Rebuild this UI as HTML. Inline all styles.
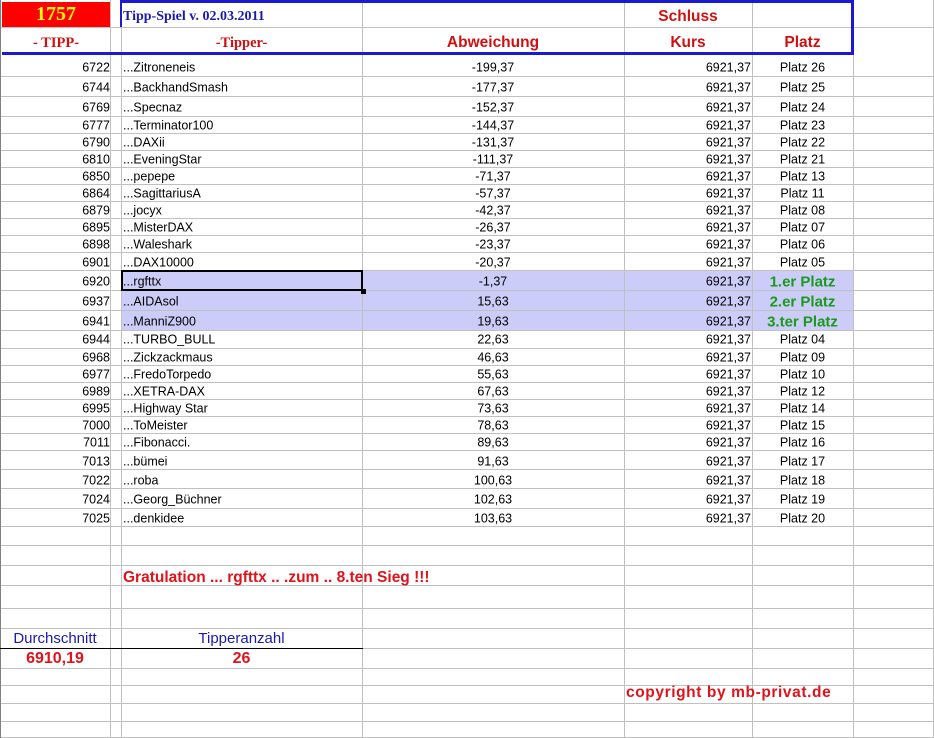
<!DOCTYPE html>
<html><head><meta charset="utf-8"><style>
*{margin:0;padding:0;box-sizing:border-box}
body{width:934px;height:738px;background:#fff;position:relative;overflow:hidden;font-family:"Liberation Sans",Arial,sans-serif;font-size:12.5px;color:#000}
.h{position:absolute;height:1px;background:#c0c0c0;left:0;width:934px}
.v{position:absolute;width:1px;background:#c0c0c0;top:0;height:738px}
.r{position:absolute;left:0;width:934px;display:flex;align-items:center}
.r div{position:absolute;white-space:nowrap;line-height:1;top:50%;transform:translateY(-45%)}
.a{right:824px;text-align:right}
.b{left:123px}
.c{left:362px;width:262px;text-align:center}
.d{right:183px}
.e{left:752px;width:101px;text-align:center}
.hl{position:absolute;left:121px;width:732px;background:#ccccf8}
.g{color:#1a9a1a;font-weight:bold;font-size:15px}
.red{color:#e0121a;font-weight:bold}
</style></head><body>
<div class="hl" style="top:270px;height:60px"></div>
<div style="position:absolute;left:2px;top:2px;width:108px;height:25px;background:#f00"></div>
<div class="h" style="top:27px"></div>
<div class="h" style="top:76px"></div><div class="h" style="top:96px"></div><div class="h" style="top:116px"></div><div class="h" style="top:133px"></div><div class="h" style="top:150px"></div><div class="h" style="top:167px"></div><div class="h" style="top:184px"></div><div class="h" style="top:201px"></div><div class="h" style="top:218px"></div><div class="h" style="top:235px"></div><div class="h" style="top:252px"></div><div class="h" style="top:270px"></div><div class="h" style="top:290px"></div><div class="h" style="top:310px"></div><div class="h" style="top:330px"></div><div class="h" style="top:348px"></div><div class="h" style="top:365px"></div><div class="h" style="top:382px"></div><div class="h" style="top:399px"></div><div class="h" style="top:416px"></div><div class="h" style="top:433px"></div><div class="h" style="top:450px"></div><div class="h" style="top:469px"></div><div class="h" style="top:488px"></div><div class="h" style="top:508px"></div><div class="h" style="top:526px"></div><div class="h" style="top:545px"></div><div class="h" style="top:565px"></div><div class="h" style="top:585px"></div><div class="h" style="top:608px"></div><div class="h" style="top:628px"></div><div class="h" style="top:648px"></div><div class="h" style="top:668px"></div><div class="h" style="top:685px"></div><div class="h" style="top:703px"></div><div class="h" style="top:721px"></div><div class="h" style="top:737px"></div>
<div class="v" style="left:0;background:#808080"></div>
<div class="v" style="left:110px"></div><div class="v" style="left:121px"></div><div class="v" style="left:362px"></div><div class="v" style="left:624px"></div><div class="v" style="left:752px"></div><div class="v" style="left:853px"></div><div class="v" style="left:933px"></div>
<div style="position:absolute;left:121px;top:0;width:733px;height:3px;background:#1a1ad0"></div>
<div style="position:absolute;left:2px;top:52px;width:852px;height:3px;background:#1a1ad0"></div>
<div style="position:absolute;left:851px;top:0;width:3px;height:55px;background:#1a1ad0"></div>
<div style="position:absolute;left:120px;top:0;width:2px;height:27px;background:#1a1ad0"></div>
<div style="position:absolute;left:121px;top:270px;width:242px;height:21px;border:2px solid #000"></div>
<div style="position:absolute;left:361px;top:289px;width:5px;height:5px;background:#000"></div>
<div style="position:absolute;left:0;top:648px;width:363px;height:1px;background:#000"></div>
<div style="position:absolute;left:2px;width:108px;top:3px;text-align:center;font:bold 20px 'Liberation Serif',serif;color:#ff0">1757</div>
<div style="position:absolute;left:123px;top:9px;font:bold 14px 'Liberation Serif',serif;color:#1a1ab0">Tipp-Spiel v. 02.03.2011</div>
<div style="position:absolute;left:0;width:112px;top:35px;text-align:center;font:bold 14.5px 'Liberation Serif',serif;color:#d01010">- TIPP-</div>
<div style="position:absolute;left:121px;width:241px;top:35px;text-align:center;font:bold 14.5px 'Liberation Serif',serif;color:#d01010">-Tipper-</div>
<div style="position:absolute;left:362px;width:262px;top:34px;text-align:center;font:bold 15.5px 'Liberation Sans',sans-serif;color:#d01010">Abweichung</div>
<div style="position:absolute;left:624px;width:128px;top:8px;text-align:center;font:bold 15.5px 'Liberation Sans',sans-serif;color:#d01010">Schluss</div>
<div style="position:absolute;left:624px;width:128px;top:34px;text-align:center;font:bold 15.5px 'Liberation Sans',sans-serif;color:#d01010">Kurs</div>
<div style="position:absolute;left:752px;width:101px;top:34px;text-align:center;font:bold 15.5px 'Liberation Sans',sans-serif;color:#d01010">Platz</div>
<div class="r" style="top:55px;height:23px"><div class="a">6722</div><div class="b">...Zitroneneis</div><div class="c">-199,37</div><div class="d">6921,37</div><div class="e">Platz 26</div></div>
<div class="r" style="top:76px;height:21px"><div class="a">6744</div><div class="b">...BackhandSmash</div><div class="c">-177,37</div><div class="d">6921,37</div><div class="e">Platz 25</div></div>
<div class="r" style="top:96px;height:21px"><div class="a">6769</div><div class="b">...Specnaz</div><div class="c">-152,37</div><div class="d">6921,37</div><div class="e">Platz 24</div></div>
<div class="r" style="top:116px;height:17px"><div class="a">6777</div><div class="b">...Terminator100</div><div class="c">-144,37</div><div class="d">6921,37</div><div class="e">Platz 23</div></div>
<div class="r" style="top:133px;height:17px"><div class="a">6790</div><div class="b">...DAXii</div><div class="c">-131,37</div><div class="d">6921,37</div><div class="e">Platz 22</div></div>
<div class="r" style="top:150px;height:17px"><div class="a">6810</div><div class="b">...EveningStar</div><div class="c">-111,37</div><div class="d">6921,37</div><div class="e">Platz 21</div></div>
<div class="r" style="top:167px;height:17px"><div class="a">6850</div><div class="b">...pepepe</div><div class="c">-71,37</div><div class="d">6921,37</div><div class="e">Platz 13</div></div>
<div class="r" style="top:184px;height:17px"><div class="a">6864</div><div class="b">...SagittariusA</div><div class="c">-57,37</div><div class="d">6921,37</div><div class="e">Platz 11</div></div>
<div class="r" style="top:201px;height:17px"><div class="a">6879</div><div class="b">...jocyx</div><div class="c">-42,37</div><div class="d">6921,37</div><div class="e">Platz 08</div></div>
<div class="r" style="top:218px;height:17px"><div class="a">6895</div><div class="b">...MisterDAX</div><div class="c">-26,37</div><div class="d">6921,37</div><div class="e">Platz 07</div></div>
<div class="r" style="top:235px;height:17px"><div class="a">6898</div><div class="b">...Waleshark</div><div class="c">-23,37</div><div class="d">6921,37</div><div class="e">Platz 06</div></div>
<div class="r" style="top:252px;height:19px"><div class="a">6901</div><div class="b">...DAX10000</div><div class="c">-20,37</div><div class="d">6921,37</div><div class="e">Platz 05</div></div>
<div class="r" style="top:270px;height:21px"><div class="a">6920</div><div class="b">...rgfttx</div><div class="c">-1,37</div><div class="d">6921,37</div><div class="e g">1.er Platz</div></div>
<div class="r" style="top:290px;height:21px"><div class="a">6937</div><div class="b">...AIDAsol</div><div class="c">15,63</div><div class="d">6921,37</div><div class="e g">2.er Platz</div></div>
<div class="r" style="top:310px;height:21px"><div class="a">6941</div><div class="b">...ManniZ900</div><div class="c">19,63</div><div class="d">6921,37</div><div class="e g">3.ter Platz</div></div>
<div class="r" style="top:330px;height:18px"><div class="a">6944</div><div class="b">...TURBO_BULL</div><div class="c">22,63</div><div class="d">6921,37</div><div class="e">Platz 04</div></div>
<div class="r" style="top:348px;height:18px"><div class="a">6968</div><div class="b">...Zickzackmaus</div><div class="c">46,63</div><div class="d">6921,37</div><div class="e">Platz 09</div></div>
<div class="r" style="top:365px;height:18px"><div class="a">6977</div><div class="b">...FredoTorpedo</div><div class="c">55,63</div><div class="d">6921,37</div><div class="e">Platz 10</div></div>
<div class="r" style="top:382px;height:18px"><div class="a">6989</div><div class="b">...XETRA-DAX</div><div class="c">67,63</div><div class="d">6921,37</div><div class="e">Platz 12</div></div>
<div class="r" style="top:399px;height:18px"><div class="a">6995</div><div class="b">...Highway Star</div><div class="c">73,63</div><div class="d">6921,37</div><div class="e">Platz 14</div></div>
<div class="r" style="top:416px;height:18px"><div class="a">7000</div><div class="b">...ToMeister</div><div class="c">78,63</div><div class="d">6921,37</div><div class="e">Platz 15</div></div>
<div class="r" style="top:433px;height:18px"><div class="a">7011</div><div class="b">...Fibonacci.</div><div class="c">89,63</div><div class="d">6921,37</div><div class="e">Platz 16</div></div>
<div class="r" style="top:450px;height:22px"><div class="a">7013</div><div class="b">...bümei</div><div class="c">91,63</div><div class="d">6921,37</div><div class="e">Platz 17</div></div>
<div class="r" style="top:469px;height:21px"><div class="a">7022</div><div class="b">...roba</div><div class="c">100,63</div><div class="d">6921,37</div><div class="e">Platz 18</div></div>
<div class="r" style="top:488px;height:21px"><div class="a">7024</div><div class="b">...Georg_Büchner</div><div class="c">102,63</div><div class="d">6921,37</div><div class="e">Platz 19</div></div>
<div class="r" style="top:508px;height:20px"><div class="a">7025</div><div class="b">...denkidee</div><div class="c">103,63</div><div class="d">6921,37</div><div class="e">Platz 20</div></div>
<div style="position:absolute;left:123px;top:569px;font-size:15.5px" class="red">Gratulation ... rgfttx .. .zum .. 8.ten Sieg !!!</div>
<div style="position:absolute;left:0;width:110px;top:630px;text-align:center;font-size:15px;color:#1a1ab0">Durchschnitt</div>
<div style="position:absolute;left:121px;width:241px;top:630px;text-align:center;font-size:15px;color:#1a1ab0">Tipperanzahl</div>
<div style="position:absolute;left:0;width:110px;top:650px;text-align:center;font-size:16px" class="red">6910,19</div>
<div style="position:absolute;left:121px;width:241px;top:650px;text-align:center;font-size:16px" class="red">26</div>
<div style="position:absolute;left:626px;top:684px;font-size:15.5px;font-weight:900;letter-spacing:0.6px;color:#e0121a">copyright by mb-privat.de</div>
</body></html>
